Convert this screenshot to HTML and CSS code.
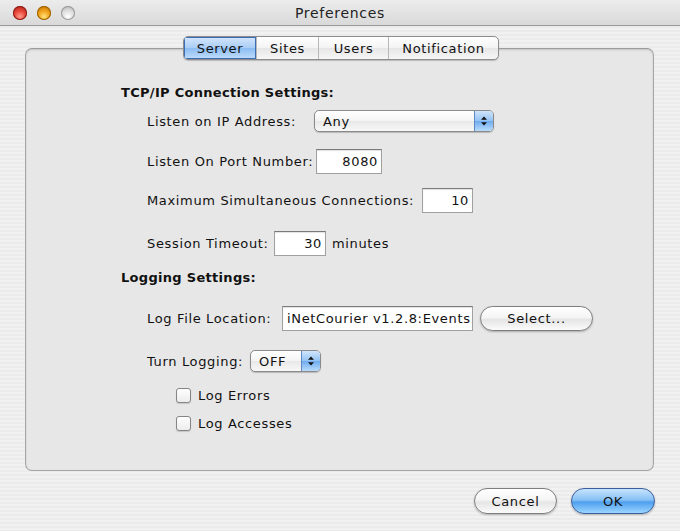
FILE: index.html
```html
<!DOCTYPE html>
<html>
<head>
<meta charset="utf-8">
<link rel="stylesheet" href="styles.css">
</head>
<body>
<div class="window">
  <div class="titlebar">
    <div class="lights">
      <span class="light red"></span>
      <span class="light yellow"></span>
      <span class="light grey"></span>
    </div>
    <div class="title">Preferences</div>
    <div></div>
  </div>
  <div class="content">
    <div class="tabs">
      <div class="tab tab-server selected">Server</div>
      <div class="tab tab-sites">Sites</div>
      <div class="tab tab-users">Users</div>
      <div class="tab tab-notif">Notification</div>
    </div>
    <div class="group">
      <div class="row heading">TCP/IP Connection Settings:</div>
      <div class="row indent r-ip">
        <span class="label w-ip">Listen on IP Address:</span>
        <div class="popup popup-any">
          <span class="popup-text">Any</span>
          <span class="popup-arrows"><svg width="8" height="12" viewBox="0 0 8 12"><path d="M4 1.5 L7 4.8 L1 4.8 Z M4 10.5 L7 7.2 L1 7.2 Z" fill="#111"/></svg></span>
        </div>
      </div>
      <div class="row indent r-port">
        <span class="label w-port">Listen On Port Number:</span>
        <div class="field f-port">8080</div>
      </div>
      <div class="row indent r-max">
        <span class="label w-max">Maximum Simultaneous Connections:</span>
        <div class="field f-max">10</div>
      </div>
      <div class="row indent r-timeout">
        <span class="label w-timeout">Session Timeout:</span>
        <div class="field f-timeout">30</div>
        <span class="label suffix">minutes</span>
      </div>
      <div class="row heading r-h2">Logging Settings:</div>
      <div class="row indent r-log">
        <span class="label w-log">Log File Location:</span>
        <div class="field f-log">iNetCourier v1.2.8:Events</div>
        <div class="btn btn-select">Select...</div>
      </div>
      <div class="row indent r-turn">
        <span class="label w-turn">Turn Logging:</span>
        <div class="popup popup-off">
          <span class="popup-text">OFF</span>
          <span class="popup-arrows"><svg width="8" height="12" viewBox="0 0 8 12"><path d="M4 1.5 L7 4.8 L1 4.8 Z M4 10.5 L7 7.2 L1 7.2 Z" fill="#111"/></svg></span>
        </div>
      </div>
      <div class="row check r-err">
        <span class="checkbox"></span><span class="label">Log Errors</span>
      </div>
      <div class="row check r-acc">
        <span class="checkbox"></span><span class="label">Log Accesses</span>
      </div>
    </div>
    <div class="buttons">
      <div class="btn btn-cancel">Cancel</div>
      <div class="btn btn-ok">OK</div>
    </div>
  </div>
</div>
</body>
</html>
```
FILE: styles.css
```css
* { box-sizing: border-box; }
html, body { margin: 0; padding: 0; }
body {
  font-family: "DejaVu Sans", "Liberation Sans", sans-serif;
  font-size: 13px;
  letter-spacing: 0.65px;
  color: #111;
  background: #fff;
}
.window {
  width: 680px;
  height: 531px;
  overflow: hidden;
  background: repeating-linear-gradient(#f1f1f1 0 2px, #ebebeb 2px 4px);
}
.titlebar {
  height: 26px;
  display: grid;
  grid-template-columns: 1fr auto 1fr;
  align-items: center;
  background: linear-gradient(#ececec, #d9d9d9);
  border-bottom: 1px solid #9a9a9a;
}
.lights {
  display: flex;
  gap: 10px;
  padding-left: 13px;
}
.light {
  width: 14px;
  height: 14px;
  border-radius: 50%;
  display: block;
}
.light.red {
  background: radial-gradient(circle at 50% 75%, #ff9a8e 0%, #e8473a 45%, #a51a10 100%);
  box-shadow: inset 0 0 0 1px #8a1c14;
}
.light.yellow {
  background: radial-gradient(circle at 50% 75%, #ffe27a 0%, #f0a21b 45%, #b66a00 100%);
  box-shadow: inset 0 0 0 1px #9b6000;
}
.light.grey {
  background: radial-gradient(circle at 50% 75%, #ffffff 0%, #dcdcdc 50%, #a9a9a9 100%);
  box-shadow: inset 0 0 0 1px #9a9a9a;
}
.title {
  font-size: 14px;
  letter-spacing: 0.7px;
  color: #222;
  padding-top: 1px;
}
.content {
  display: flex;
  flex-direction: column;
}
.tabs {
  margin: 10px auto 0 183px;
  display: flex;
  height: 24px;
  border: 1px solid #8c8c8c;
  border-radius: 5px;
  overflow: hidden;
  position: relative;
  z-index: 2;
  background: linear-gradient(#ffffff, #f3f3f3 50%, #e6e6e6 51%, #f6f6f6);
  box-shadow: 0 1px 1px rgba(0,0,0,0.2);
}
.tab {
  display: flex;
  align-items: center;
  justify-content: center;
  font-size: 13px;
  border-left: 1px solid #b8b8b8;
  color: #111;
}
.tab:first-child { border-left: none; }
.tab.selected {
  background: linear-gradient(#d4e6fb, #a9cdf6 50%, #8bbcf2 51%, #c1defb);
  box-shadow: inset 0 0 0 1px #3d6db5;
}
.tab-server { width: 72px; }
.tab-sites { width: 62px; }
.tab-users { width: 70px; }
.tab-notif { width: 110px; }
.group {
  margin: -12px 26px 0 25px;
  height: 423px;
  border: 1px solid #a5a5a5;
  border-top-color: #9b9b9b;
  border-radius: 7px;
  background: #e7e7e7;
  box-shadow: inset 0 1px 2px rgba(0,0,0,0.15);
  padding: 30px 0 0 95px;
  display: flex;
  flex-direction: column;
}
.row {
  height: 26px;
  display: flex;
  align-items: center;
}
.heading { font-weight: bold; font-size: 13px; letter-spacing: 0.3px; }
.indent { padding-left: 26px; }
.check { padding-left: 55px; }
.r-ip { margin-top: 3px; }
.r-port { margin-top: 14px; }
.r-max { margin-top: 13px; }
.r-timeout { margin-top: 17px; }
.r-h2 { margin-top: 8px; }
.r-log { margin-top: 15px; }
.r-turn { margin-top: 17px; }
.r-err { margin-top: 8px; }
.r-acc { margin-top: 2px; }
.label { white-space: nowrap; }
.w-ip { width: 167px; }
.w-port { width: 169px; }
.w-max { width: 275px; }
.w-timeout { width: 127px; }
.w-log { width: 135px; }
.w-turn { width: 103px; }
.suffix { margin-left: 6px; }
.field {
  height: 25px;
  background: #fff;
  border: 1px solid #a0a0a0;
  border-top-color: #7a7a7a;
  box-shadow: inset 0 1px 1px rgba(0,0,0,0.12);
  display: flex;
  align-items: center;
  justify-content: flex-end;
  padding-right: 3px;
  white-space: nowrap;
  overflow: hidden;
}
.f-port { width: 66px; }
.f-max { width: 51px; }
.f-timeout { width: 52px; }
.f-log { width: 191px; justify-content: flex-start; padding-left: 4px; padding-right: 0; }
.popup {
  height: 22px;
  display: flex;
  border: 1px solid #8a8a8a;
  border-radius: 5px;
  overflow: hidden;
  background: linear-gradient(#ffffff, #f4f4f4 50%, #e8e8e8 51%, #f8f8f8);
  box-shadow: 0 1px 1px rgba(0,0,0,0.2);
}
.popup-any { width: 180px; }
.popup-off { width: 71px; }
.popup-text {
  flex: 1;
  display: flex;
  align-items: center;
  padding-left: 8px;
}
.popup-arrows {
  width: 19px;
  display: flex;
  align-items: center;
  justify-content: center;
  background: linear-gradient(#d0e4fb, #93c2f4 50%, #6eabef 51%, #b9dcfb);
  border-left: 1px solid #5c87c4;
}
.btn {
  height: 25px;
  border-radius: 13px;
  display: flex;
  align-items: center;
  justify-content: center;
  font-size: 13px;
  border: 1px solid #7d7d7d;
  background: linear-gradient(#ffffff, #f5f5f5 45%, #e5e5e5 55%, #fbfbfb);
  box-shadow: 0 1px 2px rgba(0,0,0,0.25);
}
.btn-select { width: 113px; margin-left: 7px; }
.buttons {
  display: flex;
  justify-content: flex-end;
  gap: 14px;
  margin-top: 17px;
  padding-right: 25px;
}
.btn-cancel { width: 83px; height: 26px; }
.btn-ok {
  width: 84px;
  height: 26px;
  border-color: #3c5e9c;
  background: linear-gradient(#c6e3fd, #88c2f5 45%, #4f9fee 55%, #9bd6ff);
}
.checkbox {
  width: 15px;
  height: 15px;
  border: 1px solid #858585;
  border-radius: 3px;
  background: linear-gradient(#ffffff, #ececec);
  box-shadow: 0 1px 1px rgba(0,0,0,0.15);
  margin-right: 7px;
}
```
